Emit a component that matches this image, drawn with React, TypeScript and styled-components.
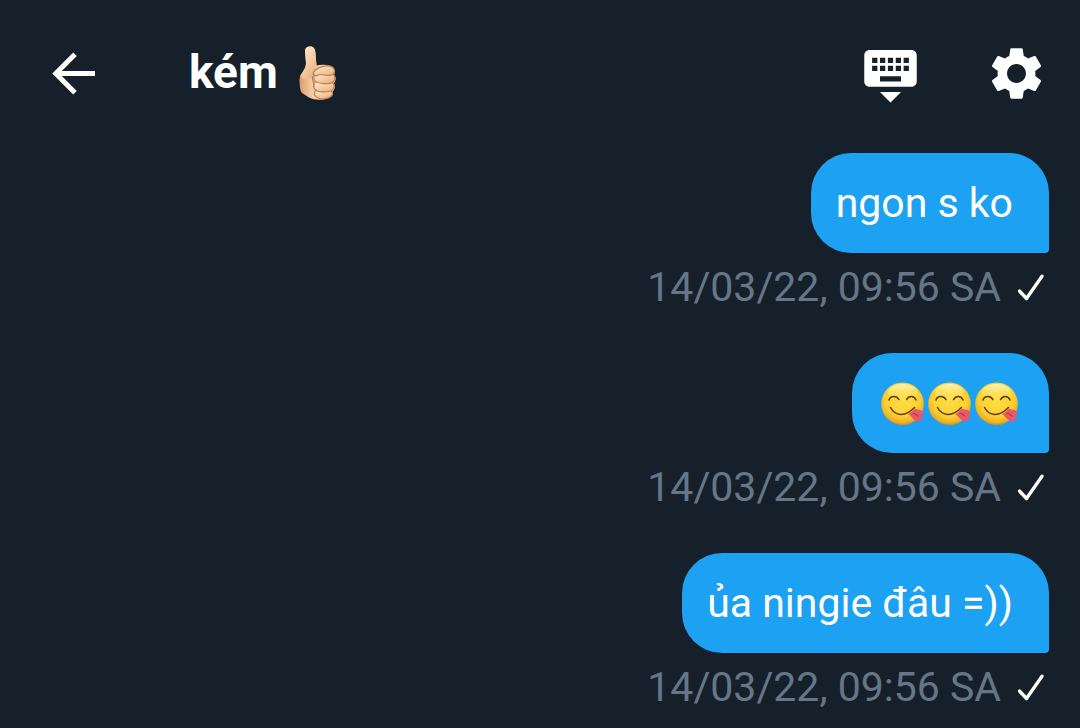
import React from "react";
import styled, { createGlobalStyle } from "styled-components";
import { MdKeyboardHide, MdSettings } from "react-icons/md";

const GlobalStyle = createGlobalStyle`
  * { box-sizing: border-box; }
  body {
    margin: 0;
    background: #16202a;
    color: #fff;
    font-family: Roboto, "Noto Sans", sans-serif;
  }
`;

const Screen = styled.div`
  min-height: 100vh;
  overflow: hidden;
`;

const Header = styled.header`
  display: flex;
  align-items: center;
  padding: 42px 32px 0 42px;
`;

const Title = styled.h1`
  display: flex;
  flex: 1;
  align-items: center;
  gap: 20px;
  margin: 0 0 0 84px;
  font-size: 46px;
  line-height: 56px;
  font-weight: 700;
`;

const TitleText = styled.span`
  padding-bottom: 4px;
`;

const Actions = styled.div`
  display: flex;
  gap: 63px;
`;

const IconButton = styled.button`
  display: block;
  padding: 0;
  border: 0;
  background: none;
  color: #fff;
  cursor: pointer;

  svg {
    display: block;
    width: 63px;
    height: 63px;
  }
`;

const Messages = styled.ul`
  display: flex;
  flex-direction: column;
  gap: 42px;
  margin: 0;
  padding: 48px 31px 0;
  list-style: none;
`;

const Message = styled.li`
  display: flex;
  flex-direction: column;
  align-items: flex-end;
`;

const Bubble = styled.p`
  display: flex;
  align-items: center;
  min-height: 100px;
  margin: 0;
  padding: 0 36px 0 25px;
  border-radius: 40px 40px 4px 40px;
  background: #1da1f2;
  font-size: 41px;
  line-height: 48px;
`;

const EmojiBubble = styled(Bubble)`
  padding: 0 30px 0 26px;
`;

const Meta = styled.div`
  display: flex;
  align-items: center;
  gap: 16px;
  padding: 10px 4px 0 0;
  color: #657786;
  font-size: 41px;
  line-height: 48px;
`;

const EmojiSvg = styled.svg`
  display: block;
  width: 47px;
  height: 48px;
`;

const ThumbSvg = styled.svg`
  display: block;
  width: 40px;
  height: 58px;
`;

const CheckSvg = styled.svg`
  display: block;
  width: 28px;
  height: 28px;
`;

const BackIcon = () => (
  <svg viewBox="0 0 63 63" fill="none" stroke="#fff" strokeWidth="5" aria-hidden="true">
    <path d="M53 31.5H14M33 12.2L13.8 31.5L33 50.8" />
  </svg>
);

const ThumbsUp = () => (
  <ThumbSvg viewBox="0 0 40 58" role="img" aria-label="thumbs up">
    <defs>
      <linearGradient id="skin" x1="0" y1="0" x2="0.7" y2="1">
        <stop offset="0" stopColor="#fff0dc" />
        <stop offset="0.5" stopColor="#f6d2a8" />
        <stop offset="1" stopColor="#e9b382" />
      </linearGradient>
      <linearGradient id="palm" x1="0" y1="0" x2="1" y2="0">
        <stop offset="0" stopColor="#dc9c69" />
        <stop offset="0.35" stopColor="#f5cda2" />
        <stop offset="1" stopColor="#f7d4ac" />
      </linearGradient>
    </defs>
    <path
      d="M7 6C7 3 9 1.500 12 1.500S17 3 17.300 7L18.500 20.500C25 19 33 20 35.500 23C37.500 26 37.300 28 35.800 29.500C38.500 32 38 36 35.700 38.300C37.500 41 37 44.500 34.700 46.500C35.500 50 33 52.500 29.500 53.500C24 55.500 16 55 11 52.500L4 48C2 46 2 41 1.500 36C1 28 8 25 8 18Z"
      fill="url(#palm)"
    />
    <path d="M7 6C7 3 9 1.500 12 1.500S17 3 17.300 7L18.500 21L14 32C8 36 5 34 2.500 31C4 27 8 25 8 18Z" fill="url(#skin)" />
    <g fill="url(#skin)" stroke="#bd7f50" strokeWidth="1.200">
      <path d="M17 46C20 44 31 44 34 46.500C36 50 32 53 28 53.500C23 54.500 18 53 16.500 50Z" />
      <path d="M16 37.500C20 35.500 32 36 35.700 38.500C37.700 43 35 46 31 46.500C24 47.500 18 47 16 43Z" />
      <path d="M16 29C20 27 32 27.500 35.800 29.800C38.500 34 36 38 31.500 38.300C25 39 19 39 16 35Z" />
      <path d="M15 29C17 22 31 18.500 35.500 23C38 27 36 30 32 30.300C26 31 22 28 18 31Z" />
    </g>
    <path d="M14.500 31C13.500 35 17 38 15.500 42" fill="none" stroke="#bd7f50" strokeWidth="1.200" />
  </ThumbSvg>
);

const YumFace = () => (
  <EmojiSvg viewBox="0 0 47 48" role="img" aria-label="face savoring food">
    <defs>
      <radialGradient id="face" cx="0.5" cy="0.4" r="0.62">
        <stop offset="0" stopColor="#ffdf45" />
        <stop offset="0.65" stopColor="#fdd032" />
        <stop offset="0.88" stopColor="#eeae24" />
        <stop offset="1" stopColor="#b98528" />
      </radialGradient>
      <linearGradient id="shine" x1="0" y1="0" x2="0" y2="1">
        <stop offset="0" stopColor="#fff3b4" />
        <stop offset="1" stopColor="#ffe35d" stopOpacity="0" />
      </linearGradient>
    </defs>
    <circle cx="24.500" cy="24.800" r="21.300" fill="url(#face)" />
    <ellipse cx="24.500" cy="13.500" rx="14.500" ry="8.500" fill="url(#shine)" />
    <g fill="none" stroke="#5f3b0a" strokeWidth="1.500" strokeLinecap="round">
      <path d="M11 21C12.500 16.500 18.500 16.300 21 20.600" />
      <path d="M28.500 20.600C31 16.300 36 16.500 38 21" />
      <path d="M12.500 28.500C17 37 27 38.500 36.500 28.500" />
    </g>
    <path
      d="M30 35C32.500 34.500 34.500 32 37 29.500C39 31 43 30 44.500 32.500C46 36 44 42.500 40 42.500C36.500 42.500 35 38.500 30 35Z"
      fill="#e9586a"
    />
    <path d="M35 34.500C37 34 38 36 40 37" fill="none" stroke="#b53a4c" strokeWidth="1.200" strokeLinecap="round" />
  </EmojiSvg>
);

const Check = () => (
  <CheckSvg viewBox="0 0 28 28" role="img" aria-label="sent">
    <path
      d="M2.500 18L9.500 25.500L25 3.200"
      fill="none"
      stroke="#fff"
      strokeWidth="3.300"
      strokeLinecap="round"
      strokeLinejoin="round"
    />
  </CheckSvg>
);

const Sent = () => (
  <Meta>
    <time dateTime="2022-03-14T09:56">14/03/22, 09:56 SA</time>
    <Check />
  </Meta>
);

export default function App() {
  return (
    <Screen>
      <GlobalStyle />
      <Header>
        <IconButton type="button" aria-label="Back">
          <BackIcon />
        </IconButton>
        <Title>
          <TitleText>kém</TitleText>
          <ThumbsUp />
        </Title>
        <Actions>
          <IconButton type="button" aria-label="Hide keyboard">
            <MdKeyboardHide />
          </IconButton>
          <IconButton type="button" aria-label="Settings">
            <MdSettings />
          </IconButton>
        </Actions>
      </Header>
      <main>
        <Messages>
          <Message>
            <Bubble>ngon s ko</Bubble>
            <Sent />
          </Message>
          <Message>
            <EmojiBubble>
              <YumFace />
              <YumFace />
              <YumFace />
            </EmojiBubble>
            <Sent />
          </Message>
          <Message>
            <Bubble>ủa ningie đâu =))</Bubble>
            <Sent />
          </Message>
        </Messages>
      </main>
    </Screen>
  );
}
